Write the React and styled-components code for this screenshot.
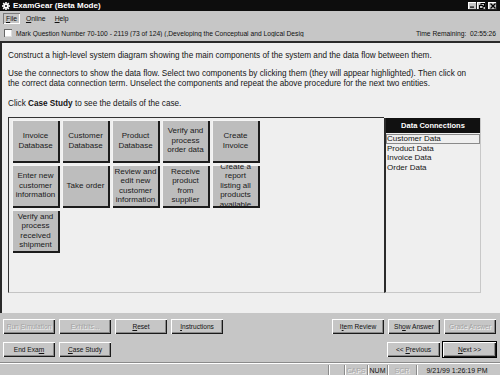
import React from "react";
import styled, { createGlobalStyle, css } from "styled-components";

const Global = createGlobalStyle`
  html, body { margin: 0; padding: 0; background: #c6c6c6; }
  body { width: 500px; height: 375px; overflow: hidden; font-family: "Liberation Sans", Arial, sans-serif; }
  * { box-sizing: border-box; }
`;

const FONT = `"Liberation Sans", Arial, sans-serif`;

const Window = styled.div`
  width: 500px;
  height: 375px;
  display: flex;
  flex-direction: column;
  background: #c6c6c6;
  font-family: ${FONT};
  font-size: 6.8px;
  color: #111;
  overflow: hidden;
`;

const TitleBar = styled.div`
  height: 11px;
  flex-shrink: 0;
  background: #0d0d0d;
  display: flex;
  align-items: center;
  padding: 0 3px 0 2px;
  gap: 3px;
`;

const Title = styled.div`
  color: #fff;
  font-weight: bold;
  font-size: 8px;
  flex: 1;
`;

const Controls = styled.div`
  display: flex;
  align-items: center;
`;

const CtrlBtn = styled.div`
  width: 9px;
  height: 8px;
  background: #c6c6c6;
  box-shadow: inset -1px -1px 0 #222, inset 1px 1px 0 #fff;
  display: flex;
  align-items: center;
  justify-content: center;
  margin-left: ${p => (p.$gap ? "2px" : "0")};
`;

const MenuBar = styled.div`
  height: 14px;
  flex-shrink: 0;
  display: flex;
  align-items: center;
  padding: 0 3px;
  gap: 3px;
  background: #c6c6c6;
`;

const MenuItem = styled.div`
  padding: 1px 3px;
  height: 11px;
  line-height: 9px;
  font-size: 6.8px;
  ${p =>
    p.$active &&
    css`
      box-shadow: inset 1px 1px 0 #7a7a7a, inset -1px -1px 0 #fff;
    `}
`;

const MarkBar = styled.div`
  height: 16px;
  flex-shrink: 0;
  display: flex;
  align-items: center;
  padding: 0 4px 0 4px;
  gap: 4px;
  background: #c6c6c6;
  font-size: 6.7px;
`;

const CheckBox = styled.div`
  width: 8px;
  height: 8px;
  background: #fff;
  box-shadow: inset 1px 1px 0 #666, inset -1px -1px 0 #ddd;
`;

const MarkText = styled.div`
  flex: 1;
  white-space: nowrap;
  overflow: hidden;
`;

const Timer = styled.div`
  white-space: pre;
`;

const Content = styled.div`
  flex: 1;
  background: #efefef;
  border-top: 2px solid #2a2a2a;
  border-left: 2px solid #2a2a2a;
  padding: 8px 0 0 6px;
  display: flex;
  flex-direction: column;
`;

const Para = styled.p`
  margin: 0 0 ${p => p.$gap || 8}px 0;
  line-height: 10px;
  font-size: 8.2px;
  color: #151515;
  white-space: nowrap;
`;

const Workspace = styled.div`
  display: flex;
  width: 473px;
  height: 176px;
`;

const Canvas = styled.div`
  flex: 1;
  border-top: 1px solid #333;
  border-left: 1px solid #333;
  border-bottom: 1px solid #c4c4c4;
  padding: 2px 3px;
  display: grid;
  grid-template-columns: repeat(5, 48px);
  grid-auto-rows: 43px;
  column-gap: 2px;
  row-gap: 2px;
  align-content: start;
`;

const Block = styled.div`
  background: #bdbdbd;
  box-shadow: inset 1px 1px 0 #f4f4f4, inset -2px -2px 0 #1c1c1c;
  display: flex;
  align-items: center;
  justify-content: center;
  text-align: center;
  overflow: hidden;
  font-size: 8px;
  line-height: 9.4px;
  color: #1a1a1a;
  padding: 0 2px 2px 1px;
`;

const DataPanel = styled.div`
  width: 97px;
  margin-top: 1px;
  border-left: 2px solid #2b2b2b;
  border-right: 1px solid #c8c8c8;
  border-bottom: 1px solid #c8c8c8;
  display: flex;
  flex-direction: column;
`;

const DataHeader = styled.div`
  height: 15px;
  background: #111;
  color: #fff;
  font-weight: bold;
  font-size: 7.5px;
  display: flex;
  align-items: center;
  justify-content: center;
`;

const DataItem = styled.div`
  height: 9.5px;
  line-height: 9px;
  padding-left: 1px;
  font-size: 8px;
  color: #151515;
  ${p =>
    p.$focus &&
    css`
      outline: 1px solid #8a8a8a;
      outline-offset: -1px;
      margin-top: 1px;
    `}
`;

const Bottom = styled.div`
  flex-shrink: 0;
  padding: 6px 4px 5px 3px;
  display: flex;
  flex-direction: column;
  gap: 8px;
`;

const Row = styled.div`
  display: flex;
  justify-content: space-between;
`;

const Group = styled.div`
  display: flex;
  gap: ${p => p.$gap ?? 4}px;
`;

const Button = styled.div`
  width: ${p => p.$w || 52}px;
  height: 15px;
  background: #c6c6c6;
  display: flex;
  align-items: center;
  justify-content: center;
  font-size: 6.6px;
  white-space: nowrap;
  color: ${p => (p.$disabled ? "#a2a2a2" : "#111")};
  text-shadow: ${p => (p.$disabled ? "1px 1px 0 #f4f4f4" : "none")};
  box-shadow: inset 1px 1px 0 #fff, inset -1px -1px 0 #1a1a1a,
    inset -2px -2px 0 #8a8a8a;
  ${p =>
    p.$default &&
    css`
      box-shadow: 0 0 0 1px #000, inset 1px 1px 0 #fff, inset -1px -1px 0 #1a1a1a,
        inset -2px -2px 0 #8a8a8a;
    `}
`;

const StatusBar = styled.div`
  height: 13px;
  flex-shrink: 0;
  border-top: 1px solid #8a8a8a;
  box-shadow: inset 0 1px 0 #fff;
  display: flex;
  justify-content: flex-end;
  align-items: stretch;
  padding: 2px 3px 0 0;
`;

const Panel = styled.div`
  width: ${p => p.$w}px;
  border-left: 1px solid #8a8a8a;
  box-shadow: inset 1px 0 0 #fff;
  display: flex;
  align-items: center;
  justify-content: center;
  font-size: 7px;
  color: ${p => (p.$disabled ? "#a8a8a8" : "#111")};
  text-shadow: ${p => (p.$disabled ? "1px 1px 0 #f4f4f4" : "none")};
`;

const Gear = () => (
  <svg width="8" height="8" viewBox="0 0 8 8">
    <g fill="#fff">
      <rect x="3.2" y="0" width="1.6" height="8" />
      <rect x="0" y="3.2" width="8" height="1.6" />
      <rect x="3.2" y="0" width="1.6" height="8" transform="rotate(45 4 4)" />
      <rect x="3.2" y="0" width="1.6" height="8" transform="rotate(-45 4 4)" />
      <circle cx="4" cy="4" r="2.4" />
    </g>
    <circle cx="4" cy="4" r="1" fill="#0d0d0d" />
  </svg>
);

const blocks = [
  ["Invoice", "Database"],
  ["Customer", "Database"],
  ["Product", "Database"],
  ["Verify and", "process", "order data"],
  ["Create", "Invoice"],
  ["Enter new", "customer", "information"],
  ["Take order"],
  ["Review and", "edit new", "customer", "information"],
  ["Receive", "product", "from", "supplier"],
  ["Create a", "report", "listing all", "products", "available"],
  ["Verify and", "process", "received", "shipment"],
];

export default function App() {
  return (
    <>
      <Global />
      <Window>
        <TitleBar>
          <Gear />
          <Title>ExamGear (Beta Mode)</Title>
          <Controls>
            <CtrlBtn>
              <svg width="5" height="5" viewBox="0 0 5 5"><rect x="0" y="3.5" width="4" height="1.2" fill="#000" /></svg>
            </CtrlBtn>
            <CtrlBtn>
              <svg width="6" height="6" viewBox="0 0 6 6" fill="none" stroke="#000" strokeWidth="1">
                <rect x="2" y="0.5" width="3.5" height="3" />
                <rect x="0.5" y="2.5" width="3.5" height="3" fill="#c6c6c6" />
              </svg>
            </CtrlBtn>
            <CtrlBtn $gap>
              <svg width="6" height="6" viewBox="0 0 6 6" stroke="#000" strokeWidth="1.3">
                <path d="M0.5 0.5 L5.5 5.5 M5.5 0.5 L0.5 5.5" />
              </svg>
            </CtrlBtn>
          </Controls>
        </TitleBar>
        <MenuBar>
          <MenuItem $active><u>F</u>ile</MenuItem>
          <MenuItem><u>O</u>nline</MenuItem>
          <MenuItem><u>H</u>elp</MenuItem>
        </MenuBar>
        <MarkBar>
          <CheckBox />
          <MarkText>
            Mark Question Number 70-100 - 2119 (73 of 124) (,Developing the Conceptual and Logical Desig
          </MarkText>
          <Timer>Time Remaining:  02:55:26</Timer>
        </MarkBar>
        <Content>
          <Para $gap={8}>
            Construct a high-level system diagram showing the main components of the system and the data flow between them.
          </Para>
          <Para $gap={10}>
            Use the connectors to show the data flow. Select two components by clicking them (they will appear highlighted). Then click on
            <br />
            the correct data connection term. Unselect the components and repeat the above procedure for the next two entities.
          </Para>
          <Para $gap={8}>
            Click <b>Case Study</b> to see the details of the case.
          </Para>
          <Workspace>
            <Canvas>
              {blocks.map((lines, bi) => (
                <Block key={bi}>
                  <span>
                    {lines.map((l, i) => (
                      <React.Fragment key={i}>
                        {i > 0 && <br />}
                        {l}
                      </React.Fragment>
                    ))}
                  </span>
                </Block>
              ))}
            </Canvas>
            <DataPanel>
              <DataHeader>Data Connections</DataHeader>
              <DataItem $focus>Customer Data</DataItem>
              <DataItem>Product Data</DataItem>
              <DataItem>Invoice Data</DataItem>
              <DataItem>Order Data</DataItem>
            </DataPanel>
          </Workspace>
        </Content>
        <Bottom>
          <Row>
            <Group>
              <Button $disabled>Run Simulation</Button>
              <Button $disabled>Exhibits...</Button>
              <Button><span><u>R</u>eset</span></Button>
              <Button><span><u>I</u>nstructions</span></Button>
            </Group>
            <Group>
              <Button><span>I<u>t</u>em Review</span></Button>
              <Button><span>Sh<u>o</u>w Answer</span></Button>
              <Button $disabled>Grade Answer</Button>
            </Group>
          </Row>
          <Row>
            <Group>
              <Button><span>End Exa<u>m</u></span></Button>
              <Button><span><u>C</u>ase Study</span></Button>
            </Group>
            <Group $gap={3}>
              <Button $w={53}><span>&lt;&lt; <u>P</u>revious</span></Button>
              <Button $w={53} $default><span><u>N</u>ext &gt;&gt;</span></Button>
            </Group>
          </Row>
        </Bottom>
        <StatusBar>
          <Panel $w={16} />
          <Panel $w={23} $disabled>CAPS</Panel>
          <Panel $w={20}>NUM</Panel>
          <Panel $w={29} $disabled>SCR</Panel>
          <Panel $w={81}>9/21/99 1:26:19 PM</Panel>
        </StatusBar>
      </Window>
    </>
  );
}
